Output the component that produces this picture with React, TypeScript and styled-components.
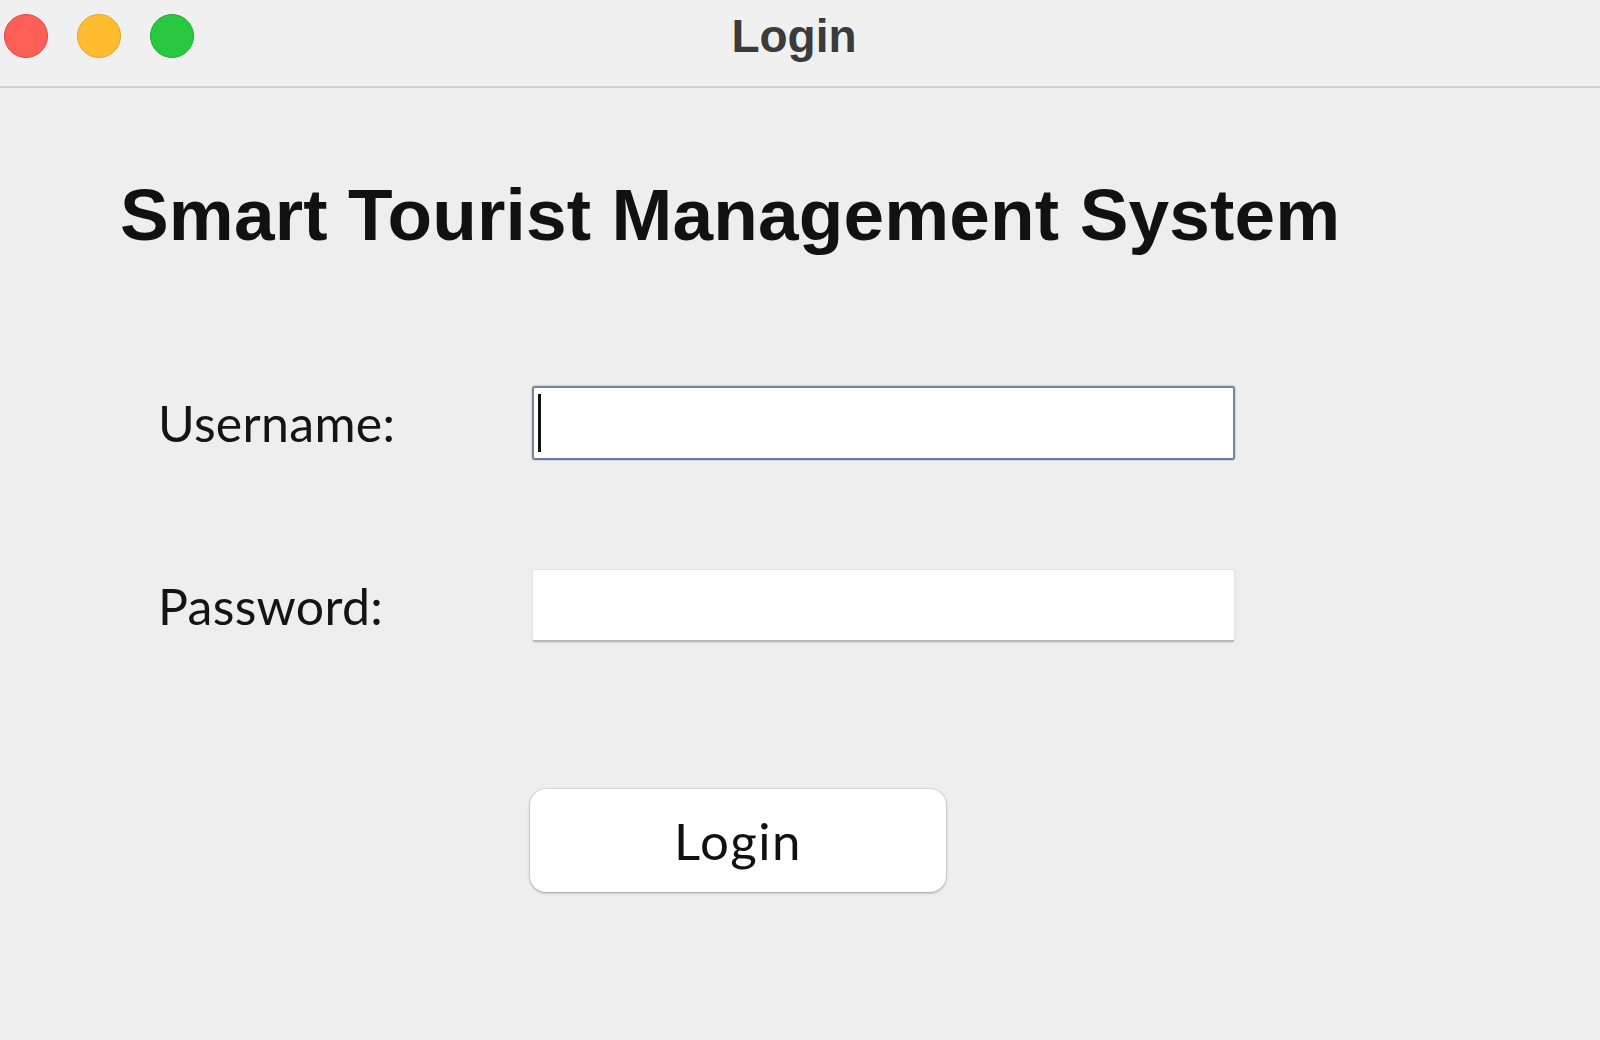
import styled, { createGlobalStyle } from "styled-components";

const GlobalStyle = createGlobalStyle`
  html, body {
    margin: 0;
    padding: 0;
    background: #eeeeee;
  }
  * {
    box-sizing: border-box;
  }
`;

const Window = styled.div`
  width: 1600px;
  height: 1040px;
  display: flex;
  flex-direction: column;
  background: #eeeeee;
  overflow: hidden;
`;

const TitleBar = styled.div`
  height: 88px;
  flex-shrink: 0;
  display: grid;
  grid-template-columns: 1fr auto 1fr;
  align-items: center;
  padding: 0 16px 14px 4px;
  background: #f0f0f0;
  border-bottom: 2px solid #d0d0d0;
`;

const Lights = styled.div`
  display: flex;
  gap: 29px;
`;

const Light = styled.span<{ $fill: string; $edge: string }>`
  width: 44px;
  height: 44px;
  border-radius: 50%;
  background: ${(p) => p.$fill};
  border: 1.5px solid ${(p) => p.$edge};
`;

const WindowTitle = styled.div`
  font-family: "Liberation Sans", Arial, sans-serif;
  font-weight: 700;
  font-size: 46px;
  color: #3b3b3b;
`;

const Content = styled.main`
  display: flex;
  flex-direction: column;
  padding: 90px 0 0 120px;
`;

const Heading = styled.h1`
  margin: 0;
  font-family: "Liberation Sans", Arial, sans-serif;
  font-weight: 700;
  font-size: 73px;
  line-height: 1;
  letter-spacing: 0.15px;
  color: #111111;
`;

const Form = styled.div`
  display: grid;
  grid-template-columns: 374px 703px;
  grid-template-rows: 74px 73px auto;
  row-gap: 109px;
  align-items: center;
  margin: 135px 0 0 38px;
`;

const Label = styled.label`
  font-family: Lato, "Open Sans", sans-serif;
  font-size: 50px;
  letter-spacing: 0.3px;
  color: #141414;
`;

const Field = styled.div<{ $focused?: boolean }>`
  height: 100%;
  display: flex;
  align-items: center;
  padding-left: 4px;
  background: #ffffff;
  border-radius: 3px;
  border: ${(p) => (p.$focused ? "2px solid #7587a0" : "1px solid #e4e4e4")};
  border-bottom: ${(p) => (p.$focused ? "2px solid #6b7d96" : "2px solid #b9b9b9")};
  box-shadow: ${(p) =>
    p.$focused
      ? "0 0 0 1px rgba(150, 170, 200, 0.35)"
      : "0 1px 1px rgba(0, 0, 0, 0.08)"};
`;

const Caret = styled.span`
  width: 3px;
  height: 58px;
  background: #111111;
`;

const LoginButton = styled.button`
  grid-column: 2;
  justify-self: start;
  margin: 38px 0 0 -2px;
  width: 416px;
  height: 103px;
  border: none;
  border-radius: 16px;
  background: #ffffff;
  box-shadow: 0 1px 3px rgba(0, 0, 0, 0.3), 0 0 0 1px rgba(0, 0, 0, 0.05);
  font-family: Lato, "Open Sans", sans-serif;
  font-size: 51px;
  letter-spacing: 1.5px;
  color: #111111;
  cursor: pointer;
`;

function App() {
  return (
    <>
      <GlobalStyle />
      <Window>
        <TitleBar>
          <Lights>
            <Light $fill="#fe5f57" $edge="#e2463f" />
            <Light $fill="#febc2e" $edge="#e1a325" />
            <Light $fill="#28c840" $edge="#1dad2b" />
          </Lights>
          <WindowTitle>Login</WindowTitle>
          <span />
        </TitleBar>
        <Content>
          <Heading>Smart Tourist Management System</Heading>
          <Form>
            <Label>Username:</Label>
            <Field $focused>
              <Caret />
            </Field>
            <Label>Password:</Label>
            <Field />
            <LoginButton>Login</LoginButton>
          </Form>
        </Content>
      </Window>
    </>
  );
}

export default App;
